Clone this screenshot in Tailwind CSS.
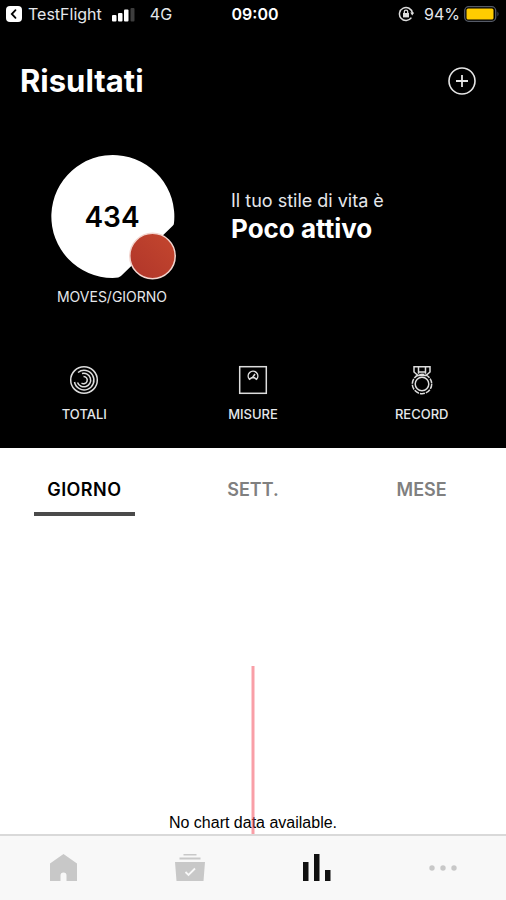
<!DOCTYPE html>
<html lang="it">
  <head>
    <meta charset="UTF-8" />
    <meta name="viewport" content="width=device-width, initial-scale=1.0" />
    <title>Risultati</title>
    <script src="https://cdn.jsdelivr.net/npm/@tailwindcss/browser@4"></script>
  </head>
  <body class="min-h-screen flex flex-col bg-white font-['Inter','Liberation_Sans',sans-serif]">
    <section class="bg-black text-white pb-6">
      <!-- status bar -->
      <div class="h-7 px-1.5 grid grid-cols-[1fr_auto_1fr] items-center text-base leading-7 text-gray-200">
        <div class="flex items-center">
          <a href="#" class="flex items-center gap-1.5">
            <svg class="w-4 h-4" viewBox="0 0 16 16" aria-hidden="true">
              <rect width="16" height="16" rx="4" fill="#fff" />
              <path d="M9.5 4.2 5.8 8l3.7 3.8" fill="none" stroke="#000" stroke-width="1.8" stroke-linecap="round" />
            </svg>
            TestFlight
          </a>
          <svg class="w-6 h-4 ml-2.5" viewBox="0 0 24 16" aria-hidden="true">
            <rect x="0" y="9" width="4.500" height="6.500" rx="1" fill="#fff" />
            <rect x="6" y="7" width="4.500" height="8.500" rx="1" fill="#fff" />
            <rect x="12" y="3.500" width="4.500" height="12" rx="1" fill="#fff" />
            <rect x="18.500" y="2" width="4" height="13.500" rx="1" fill="#3d3d3d" />
          </svg>
          <span class="ml-3.5">4G</span>
        </div>
        <span class="pl-1 font-semibold text-white">09:00</span>
        <div class="flex items-center justify-end">
          <svg class="w-4 h-4 mr-2.5" viewBox="0 0 16 16" fill="none" stroke="#ddd" stroke-width="1.5" aria-hidden="true">
            <path d="M14.400 7A6.500 6.500 0 1 0 13.400 11.600" />
            <path d="M12.200 6.600h4l-2 2.8z" fill="#ddd" stroke="none" />
            <rect x="5" y="7" width="6" height="4.400" fill="#ddd" stroke="none" />
            <path d="M6.300 7V5.800a1.700 1.700 0 0 1 3.400 0V7" stroke-width="1.3" />
          </svg>
          94%
          <svg class="w-9 h-4 ml-1" viewBox="0 0 36 16" aria-hidden="true">
            <rect x=".7" y=".7" width="31" height="14.6" rx="4" fill="none" stroke="#555a66" stroke-width="1.3" />
            <rect x="2.500" y="2.500" width="27" height="11" rx="1.5" fill="#fc0" />
            <path d="M33.500 5.500q2 2.500 0 5z" fill="#555a66" />
          </svg>
        </div>
      </div>

      <div class="mt-[33px] pl-5 pr-7 flex justify-between items-center">
        <h1 class="text-[31px] leading-10 font-bold">Risultati</h1>
        <button type="button" aria-label="Aggiungi" class="p-0.5">
          <svg class="w-7 h-7" viewBox="0 0 28 28" fill="none" stroke="#e5e5e5" stroke-width="1.6">
            <circle cx="14" cy="14" r="13" />
            <path d="M14 8v12M8 14h12" stroke-width="1.800" />
          </svg>
        </button>
      </div>

      <!-- daily moves and lifestyle -->
      <div class="mt-13 pl-12 pr-5 flex items-start">
        <div class="w-32 flex flex-col items-center">
          <div class="relative w-32 h-32">
            <svg class="w-full h-full" viewBox="0 0 128 128" aria-hidden="true">
              <defs>
                <linearGradient id="level" x1="0" y1="1" x2="1" y2="0">
                  <stop offset="0" stop-color="#b0352a" />
                  <stop offset="1" stop-color="#c4472e" />
                </linearGradient>
              </defs>
              <path d="M126 70A61.500 61.500 0 1 0 64.500 125Q71.500 125 73.500 122.500L124.500 73Q126 72 126 70z" fill="#fff" />
              <circle cx="104.500" cy="103" r="22.700" fill="url(#level)" stroke="#f3d5cf" stroke-width="1.500" />
            </svg>
            <span class="absolute inset-0 flex items-center justify-center text-[28px] font-semibold text-black">434</span>
          </div>
          <span class="mt-1.5 text-sm leading-5 text-gray-200">MOVES/GIORNO</span>
        </div>
        <div class="mt-[34px] ml-[55px]">
          <p class="text-lg leading-7 text-gray-200">Il tuo stile di vita è</p>
          <p class="text-[26px] leading-7 font-bold">Poco attivo</p>
        </div>
      </div>

      <div class="mt-14 pt-px grid grid-cols-3 text-[13px] leading-5 font-medium text-gray-200">
        <a href="#" class="flex flex-col items-center gap-2">
          <svg class="w-8 h-8" viewBox="0 0 32 32" fill="none" stroke="#ddd" stroke-width="1.500" aria-hidden="true">
            <circle cx="16" cy="16" r="13.300" />
            <path d="M10 8.500a9.800 9.800 0 1 1-3.500 9.500" />
            <path d="M14 9.500A6.800 6.800 0 1 1 9.500 18.500" />
            <path d="M15.500 12.500a3.600 3.600 0 1 1-2 6.500" />
          </svg>
          TOTALI
        </a>
        <a href="#" class="flex flex-col items-center gap-2">
          <svg class="w-8 h-8" viewBox="0 0 32 32" fill="none" stroke="#ddd" stroke-width="1.500" aria-hidden="true">
            <rect x="2.700" y="2.700" width="26.600" height="26.600" />
            <path d="M12.500 15.300a4.800 4.800 0 1 1 7 0l-2-1.500h-3z" />
            <path d="M15.500 13.500l2.500-3.500" />
          </svg>
          MISURE
        </a>
        <a href="#" class="flex flex-col items-center gap-2">
          <svg class="w-8 h-8" viewBox="0 0 32 32" fill="none" stroke="#ddd" stroke-width="1.500" aria-hidden="true">
            <path d="M8 2.700h16v5.300l-4 3.500h-8L8 8z" />
            <path d="M12.500 2.700v7M19.500 2.700v7M12.500 8h7" />
            <circle cx="16" cy="20" r="9.700" stroke-dasharray="5.100 1" />
            <circle cx="16" cy="20" r="6.800" />
          </svg>
          RECORD
        </a>
      </div>
    </section>

    <!-- period tabs -->
    <div role="tablist" class="pt-7 grid grid-cols-3 text-lg leading-7 font-semibold text-[#808080]">
      <button type="button" role="tab" aria-selected="true" class="mx-auto w-3/5 pb-2 border-b-4 border-[#4a4a4a] tracking-wide text-black">GIORNO</button>
      <button type="button" role="tab" aria-selected="false" class="mx-auto w-3/5 pb-2 border-b-4 border-transparent">SETT.</button>
      <button type="button" role="tab" aria-selected="false" class="mx-auto w-3/5 pb-2 border-b-4 border-transparent">MESE</button>
    </div>

    <div class="relative flex-1 flex flex-col justify-end items-center">
      <p class="pb-px text-base leading-5 text-black font-['Liberation_Sans',Arial,sans-serif]">No chart data available.</p>
      <div class="absolute bottom-0 left-1/2 -translate-x-1/2 w-[3px] h-42 bg-[#f4505f]/55"></div>
    </div>

    <nav class="h-[66px] grid grid-cols-4 items-center justify-items-center bg-[#f8f8f8] border-t-2 border-[#d9d9d9]">
      <a href="#" aria-label="Home">
        <svg class="w-8 h-8" viewBox="0 0 32 32" fill="#c8c8c8">
          <path d="M16.500 2 30 11.500V29H19.500v-5.500a3 3 0 0 0-6 0V29H3V11.500z" />
        </svg>
      </a>
      <a href="#" aria-label="Attività">
        <svg class="w-8 h-8" viewBox="0 0 32 32" fill="#c8c8c8">
          <path d="M9.500 2h13v1.500h-13zM5.500 5.500h21v2h-21zM1 10h30l-1.500 19h-27z" />
          <path d="m11.500 20 3 3 6.500-6.500" fill="none" stroke="#f8f8f8" stroke-width="1.800" />
        </svg>
      </a>
      <a href="#" aria-label="Risultati">
        <svg class="w-8 h-8" viewBox="0 0 32 32" fill="#111">
          <path d="M3 10h5.500v19H3zM14 2h5.500v27H14zM25 18h5.500v11H25z" />
        </svg>
      </a>
      <a href="#" aria-label="Altro">
        <svg class="w-8 h-8" viewBox="0 0 32 32" fill="#c8c8c8">
          <circle cx="5" cy="16" r="2.700" />
          <circle cx="16" cy="16" r="2.700" />
          <circle cx="27" cy="16" r="2.700" />
        </svg>
      </a>
    </nav>
  </body>
</html>
